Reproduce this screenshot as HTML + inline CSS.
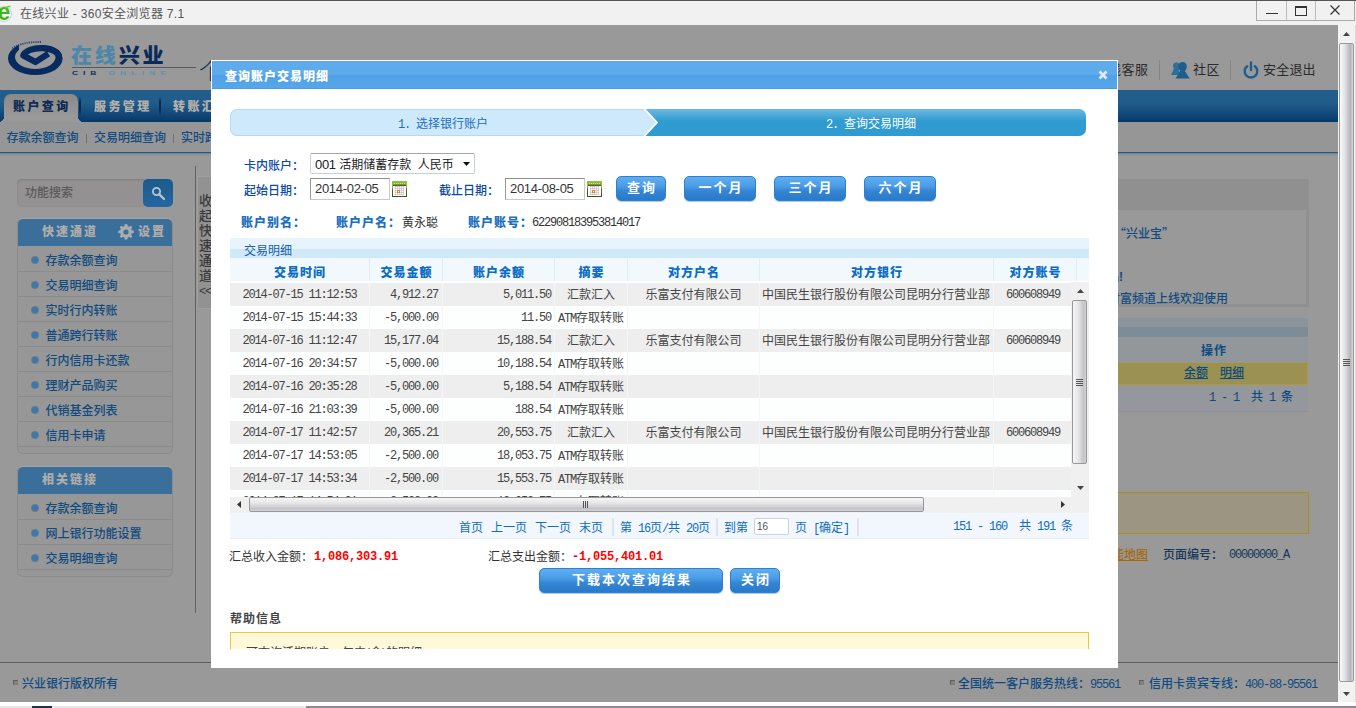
<!DOCTYPE html>
<html lang="zh-CN">
<head>
<meta charset="utf-8">
<title>在线兴业</title>
<style>
*{box-sizing:border-box;margin:0;padding:0}
html,body{width:1356px;height:708px;overflow:hidden;background:#999}
body{position:relative;font-family:"Liberation Sans","Noto Sans CJK SC",sans-serif;font-size:12px;color:#333}
.a{position:absolute;white-space:nowrap}
.t{position:absolute;white-space:nowrap;line-height:14px;height:14px;font-size:12px}
.b{font-weight:bold}
.m{font-family:"Liberation Mono","Noto Sans CJK SC",monospace;letter-spacing:-1.2px}
.mb{font-family:"Liberation Mono","Noto Sans CJK SC",monospace;font-weight:bold;letter-spacing:-0.2px}
/* ---------- browser chrome ---------- */
#tb{left:0;top:0;width:1356px;height:25px;background:#f1f1f1;border-top:1px solid #555}
#tb .ttl{left:20px;top:6px;color:#555;font-size:12px;line-height:14px;letter-spacing:.3px}
#wc{left:1256px;top:1px;width:99px;height:20px;border:1px solid #aaa;border-top:none;background:#f1f1f1}
#wc i{position:absolute;top:0;width:1px;height:19px;background:#bbb}
#vs{left:1338px;top:25px;width:18px;height:677px;background:#f2f2f2;border-right:1px solid #dcdcdc}
#vs .th{left:1px;top:18px;width:15px;height:639px;border:1px solid #999;border-radius:2px;background:linear-gradient(90deg,#fafafa 0,#e4e4e8 35%,#b4b4bc 80%,#d8d8dc 100%)}
#bot{left:0;top:702px;width:1356px;height:6px;background:#fff}
#bot i{position:absolute;left:306px;top:4px;width:1050px;height:2px;background:#908a90}
#bot b{position:absolute;left:32px;top:4px;width:20px;height:2px;background:#262c52}
#bot u{position:absolute;left:0;top:4px;width:306px;height:2px;background:#e6e6e6}
/* ---------- dimmed page ---------- */
#pg{left:0;top:25px;width:1338px;height:677px;background:#999;overflow:hidden;font-weight:500}
#nav{left:0;top:65px;width:1338px;height:32px;background:linear-gradient(#225e8c 0,#215d8b 40%,#164f80 65%,#053969 100%)}
#tab{left:4px;top:4px;width:74px;height:28px;background:linear-gradient(#898989,#999 80%);border-radius:7px 7px 0 0}
#tab:before,#tab:after{content:"";position:absolute;bottom:0;width:6px;height:6px}
#tab:before{left:-6px;background:radial-gradient(circle at 0 0,transparent 6px,#999 6.5px)}
#tab:after{right:-6px;background:radial-gradient(circle at 100% 0,transparent 6px,#999 6.5px)}
.nv{top:9px;font-size:12px;font-weight:900;letter-spacing:2.4px;line-height:16px;color:#b6b0aa}
.ns{top:6px;width:2px;height:20px;background:linear-gradient(rgba(10,40,80,0),#0b2b54 30%,#0b2b54 70%,rgba(10,40,80,0))}
#sub{left:0;top:97px;width:1338px;height:30px;background:#969696}
#sub .t{top:9px;color:#0f4a80}
#subl{left:0;top:127px;width:1338px;height:4px;background:linear-gradient(#1b5b91 0,#1b5b91 25%,#5f7990 25%,#8c8e90 50%,#949494 75%,#999 100%)}
.sb{color:#777;}
/* sidebar */
.pn{left:17px;width:156px;border:1px solid #8b8b8b;border-top-color:#a4a2a0;border-radius:6px;background:#979797}
.ph{left:0;top:0;width:154px;height:27px;background:#3b6f9b;border-radius:5px 5px 0 0}
.ph .t{top:5px;font-size:12px;font-weight:900;letter-spacing:2px;color:#b0aca8;line-height:16px;height:16px}
.it{left:0;width:154px;height:25px;border-bottom:1px solid #8b8b8b}
.it i{position:absolute;left:14px;top:10px;width:6px;height:6px;border-radius:50%;background:#3c78ae;box-shadow:0 0 0 1px #687c90}
.it span{position:absolute;left:27.500px;top:7px;line-height:14px;color:#0f4a80;white-space:nowrap}
/* ---------- dialog ---------- */
#dg{left:211px;top:60px;width:907px;height:608px;background:#fff;overflow:hidden}
#dt{left:1px;top:1px;width:905px;height:28px;background:linear-gradient(#5eaceb 0,#5daaea 48%,#4fa0e8 52%,#57a6e9 96%,#4392dc 100%)}
#dt .t{left:13px;top:9px;color:#fff;font-weight:900;letter-spacing:1px}
.lb{color:#0b4ba3;font-weight:500}
.inp{height:22px;width:80px;border:1px solid #c8c8c8;border-top-color:#8e8e8e;border-left-color:#9a9a9a;background:#fff;font-size:13px;letter-spacing:-0.3px;line-height:20px;padding-left:4px;color:#333}
.btn{top:116px;height:25px;border-radius:5px;border:1px solid #2d7fd0;background:linear-gradient(#5eaef1 0,#4b9ce6 40%,#3585d5 60%,#2b7aca 100%);color:#fff;font-weight:bold;font-size:13px;letter-spacing:2px;text-align:center;line-height:22px;text-indent:2px;box-shadow:0 1px 0 #a8cff0}
.ib{color:#1c6fc0;font-weight:900;letter-spacing:1px}
/* table */
#cap{left:19px;top:178px;width:859px;height:20px;background:linear-gradient(#e7f4fd 55%,#cfe9f8 55%)}
#hd{left:19px;top:198px;width:859px;height:23px;background:#f1f8fe}
#hd div{position:absolute;top:0;height:23px;border-right:1px solid #e1ecf5;text-align:center;color:#0a6cc4;font-weight:900;letter-spacing:1px;line-height:31px;text-indent:1px;overflow:hidden}
#bd{left:19px;top:221px;width:841px;height:216px;overflow:hidden;background:#fdfefe}
.r{position:absolute;left:0;width:841px;height:23px}
.r.g{background:#eee}
.r div{position:absolute;top:0;height:23px;line-height:25px;border-right:1px solid #f6f6f6;color:#444;white-space:nowrap;overflow:hidden}
.c1{left:0;width:140px;text-align:center}
.c2{left:140px;width:73px;text-align:right;padding-right:4px}
.c3{left:213px;width:112px;text-align:right;padding-right:3px}
.c4{left:325px;width:73px;text-align:center}
.c5{left:398px;width:132px;text-align:center}
.c6{left:530px;width:234px;text-align:left;padding-left:2px}
.c7{left:764px;width:83px;text-align:center;padding-right:4px}
#pgr{left:19px;top:453px;width:859px;height:26px;background:#f2f7fd;border-bottom:1px solid #e6edf5}
#pgr .t{top:8px;color:#0e6cc4;white-space:pre}
#pgr i{position:absolute;top:5px;width:2px;height:18px;background:#dfe3ea}
.sbtrk{background:#f0f0f0}
</style>
</head>
<body>
<!-- dimmed page behind the modal -->
<div id="pg" class="a">
  <!-- logo -->
  <svg class="a" style="left:0;top:11px" width="70" height="45" viewBox="0 36 70 45">
    <defs><clipPath id="lc"><path d="M0 36H70V81H0Z M19 36H70V57H62.100A21.100 12.100 0 0 0 19.900 57H19Z" clip-rule="evenodd"/></clipPath></defs>
    <path clip-path="url(#lc)" fill-rule="evenodd" fill="#072b5e" d="M8 58.300A27.300 16.800 0 1 0 62.600 58.300A27.300 16.800 0 1 0 8 58.300Z M15 57A20.300 12 0 1 0 55.600 57A20.300 12 0 1 0 15 57Z"/>
    <path d="M59 57A18 9 0 0 0 23.300 55.400L35.500 62L48.400 53.600" fill="none" stroke="#072b5e" stroke-width="6.200" stroke-linejoin="round"/>
    <path d="M12.500 48.500C18 44 28 41.800 41 42" fill="none" stroke="#072b5e" stroke-width="1.800" stroke-dasharray="1.200 1" opacity=".75"/>
  </svg>
  <div class="a" style="left:71px;top:18px;font-size:20px;font-weight:900;line-height:26px;letter-spacing:2.6px;color:#0a2a5c;transform:scaleX(1.055);transform-origin:0 0"><span style="color:#4b87a9">在线</span>兴业</div>
  <div class="a" style="left:72px;top:42px;width:124px;height:1px;background:#595959"></div>
  <div class="a b" style="left:72px;top:44px;font-size:6px;line-height:8px;letter-spacing:3.5px;color:#0a2a5c;transform:scaleX(1.4);transform-origin:0 0">CIB <span style="color:#5a93b3;letter-spacing:3.7px">ONLINE</span></div>
  <div class="a" style="left:199px;top:32px;font-size:23px;line-height:28px;color:#0a2a5c;font-weight:300">个</div>
  <!-- top right links -->
  <div class="a" style="left:1108px;top:37px;font-size:13px;line-height:16px;color:#2b2b2b;font-weight:400;letter-spacing:0.5px">线客服</div>
  <div class="a" style="left:1159px;top:35px;width:1px;height:20px;background:#858585"></div>
  <svg class="a" style="left:1170px;top:36px" width="21" height="19" viewBox="0 0 21 19"><path d="M6.5 1.5c2.2 0 3.6 1.8 3.6 4.2 0 1.6-.7 3-1.7 3.800l4 4.500H1l3-6.500C3.300 6.800 3 5.900 3 5c0-2 1.400-3.500 3.500-3.500z" fill="#2b6f9f"/><path d="M12.500 1c2.600 0 4.300 2 4.300 4.700 0 1.800-.8 3.300-2 4.300l5 7.500H5.500l4.700-7.700C9.100 8.800 8.400 7.300 8.400 5.700 8.400 3 10 1 12.500 1z" fill="#1d5e8f"/></svg>
  <div class="a" style="left:1193px;top:37px;font-size:13px;line-height:16px;color:#2b2b2b;font-weight:400;letter-spacing:0.5px">社区</div>
  <div class="a" style="left:1230px;top:35px;width:1px;height:20px;background:#858585"></div>
  <svg class="a" style="left:1242px;top:36px" width="18" height="19" viewBox="0 0 18 19"><path d="M5.200 5.200A6.300 6.300 0 1 0 12.800 5.200" fill="none" stroke="#1d5e8f" stroke-width="2.400" stroke-linecap="round"/><path d="M9 1.500V9" stroke="#1d5e8f" stroke-width="2.400" stroke-linecap="round"/></svg>
  <div class="a" style="left:1263px;top:37px;font-size:13px;line-height:16px;color:#2b2b2b;font-weight:400;letter-spacing:0.2px">安全退出</div>
  <!-- main nav -->
  <div id="nav" class="a">
    <div id="tab" class="a"></div>
    <div class="a nv" style="left:13px;color:#0d2a52">账户查询</div>
    <div class="a ns" style="left:79px"></div>
    <div class="a nv" style="left:94px">服务管理</div>
    <div class="a ns" style="left:159px"></div>
    <div class="a nv" style="left:173px">转账汇款</div>
  </div>
  <div id="sub" class="a">
    <div class="t" style="left:6.500px">存款余额查询</div><div class="a" style="left:86px;top:12px;width:1px;height:9px;background:#707070"></div>
    <div class="t" style="left:94px">交易明细查询</div><div class="a" style="left:173px;top:12px;width:1px;height:9px;background:#707070"></div>
    <div class="t" style="left:181px">实时跨行转账</div>
  </div>
  <div id="subl" class="a"></div>
  <!-- search -->
  <div class="a" style="left:17px;top:154px;width:130px;height:28px;border-radius:5px;background:#939191;box-shadow:inset 0 1px 2px #7d7d7d"></div>
  <div class="t" style="left:25px;top:161px;color:#5a5a5a;font-size:12px">功能搜索</div>
  <div class="a" style="left:143px;top:154px;width:30px;height:28px;border-radius:5px;background:linear-gradient(#1b5a8c,#2467a0)"></div>
  <svg class="a" style="left:151px;top:161px" width="15" height="15" viewBox="0 0 15 15"><circle cx="5.500" cy="5.500" r="3.600" fill="none" stroke="#b9c3cc" stroke-width="1.800"/><path d="M8.300 8.300L13 13" stroke="#b9c3cc" stroke-width="2.400" stroke-linecap="round"/></svg>
  <!-- quick panel -->
  <div class="a pn" style="top:193px;height:236px">
    <div class="a ph"><div class="t" style="left:24px">快速通道</div>
      <svg class="a" style="left:100px;top:5px" width="16" height="16" viewBox="0 0 16 16"><path d="M8 0l1.300.2.400 2 1.400.600 1.700-1.100 1.500 1.500-1.100 1.700.600 1.400 2 .400V8.900l-2 .400-.600 1.400 1.100 1.700-1.500 1.500-1.700-1.100-1.400.600-.400 2H6.700l-.400-2-1.400-.600-1.700 1.100-1.500-1.500 1.100-1.700-.600-1.400-2-.400V6.700l2-.400.600-1.400-1.100-1.700 1.500-1.500 1.700 1.100 1.400-.600.400-2z" fill="#aaacae"/><circle cx="8" cy="8" r="2.600" fill="#3b6f9b"/></svg>
      <div class="t" style="left:120px">设置</div></div>
    <div class="a it" style="top:28px"><i></i><span>存款余额查询</span></div>
    <div class="a it" style="top:53px"><i></i><span>交易明细查询</span></div>
    <div class="a it" style="top:78px"><i></i><span>实时行内转账</span></div>
    <div class="a it" style="top:103px"><i></i><span>普通跨行转账</span></div>
    <div class="a it" style="top:128px"><i></i><span>行内信用卡还款</span></div>
    <div class="a it" style="top:153px"><i></i><span>理财产品购买</span></div>
    <div class="a it" style="top:178px"><i></i><span>代销基金列表</span></div>
    <div class="a it" style="top:203px"><i></i><span>信用卡申请</span></div>
  </div>
  <div class="a pn" style="top:441px;height:111px">
    <div class="a ph"><div class="t" style="left:24px">相关链接</div></div>
    <div class="a it" style="top:28px"><i></i><span>存款余额查询</span></div>
    <div class="a it" style="top:53px"><i></i><span>网上银行功能设置</span></div>
    <div class="a it" style="top:78px"><i></i><span>交易明细查询</span></div>
  </div>
  <!-- collapse handle -->
  <div class="a" style="left:195px;top:141px;width:1px;height:447px;background:#616161"></div>
  <div class="a" style="left:197px;top:151px;width:20px;height:133px;background:#929292;border:1px solid #9f9f9f"></div>
  <div class="a" style="left:199px;top:168px;width:14px;font-size:13px;line-height:15px;color:#3a3a3a;white-space:normal;word-break:break-all">收起快速通道<span class="m" style="white-space:nowrap;font-size:12px">&lt;&lt;</span></div>
  <!-- right content (visible beside dialog) -->
  <div class="a" style="left:217px;top:154px;width:1092px;height:128px;background:#909090"></div>
  <div class="a" style="left:220px;top:185px;width:1086px;height:94px;background:#999"></div>
  <div class="t" style="left:1114px;top:201px;color:#0f4a80"><span style="font-family:'Noto Sans CJK SC',sans-serif">“</span>兴业宝<span style="font-family:'Noto Sans CJK SC',sans-serif">”</span></div>
  <div class="t b" style="left:1107px;top:245px;color:#0f4a80">品!</div>
  <div class="a" style="left:1108px;top:267px;height:12px;overflow:hidden"><div style="line-height:14px;color:#0f4a80;white-space:nowrap">财富频道上线欢迎使用</div></div>
  <div class="a" style="left:217px;top:293px;width:1091px;height:19px;background:linear-gradient(#8b949b 48%,#7d8c97 48%)"></div>
  <div class="a" style="left:217px;top:312px;width:1091px;height:25px;background:#92979b"></div>
  <div class="t b" style="left:1201px;top:319px;color:#0d4a80;letter-spacing:1px">操作</div>
  <div class="a" style="left:217px;top:337px;width:1091px;height:23px;background:#9a9152;border:1px solid #b39a2e;border-top-color:#9f9a66"></div>
  <div class="t" style="left:1184px;top:341px;color:#0d4a80;text-decoration:underline">余额</div>
  <div class="t" style="left:1220px;top:341px;color:#0d4a80;text-decoration:underline">明细</div>
  <div class="a" style="left:217px;top:360px;width:1091px;height:27px;background:#94979b;border-bottom:1px solid #8f9195"></div>
  <div class="t m" style="left:1209px;top:365px;color:#0d4a80;white-space:pre">1 - 1  <span style="letter-spacing:0;font-family:'Liberation Sans','Noto Sans CJK SC',sans-serif">共</span> 1 <span style="letter-spacing:0;font-family:'Liberation Sans','Noto Sans CJK SC',sans-serif">条</span></div>
  <div class="a" style="left:217px;top:467px;width:1092px;height:42px;background:#9b9581;border:1px solid #a88d1f"></div>
  <div class="t" style="left:1100px;top:523px;color:#a8680c;text-decoration:underline">功能地图</div>
  <div class="t" style="left:1163px;top:523px;color:#16365a">页面编号：</div>
  <div class="t m" style="left:1229px;top:523px;color:#16365a">00000000_A</div>
  <!-- footer -->
  <div class="a" style="left:0;top:637px;width:1338px;height:1px;background:#5e5e5e"></div>
  <div class="a" style="left:13px;top:655px;width:5px;height:5px;background:#82847c;border:1px solid #7e7e7e;border-left-color:#5e5e5e;border-top-color:#5e5e5e"></div>
  <div class="t" style="left:22px;top:652px;color:#0f4a80">兴业银行版权所有</div>
  <div class="a" style="left:950px;top:655px;width:5px;height:5px;background:#82847c;border:1px solid #7e7e7e;border-left-color:#5e5e5e;border-top-color:#5e5e5e"></div>
  <div class="t" style="left:958px;top:652px;color:#0f4a80">全国统一客户服务热线：<span class="m">95561</span></div>
  <div class="a" style="left:1139px;top:655px;width:5px;height:5px;background:#82847c;border:1px solid #7e7e7e;border-left-color:#5e5e5e;border-top-color:#5e5e5e"></div>
  <div class="t" style="left:1149px;top:652px;color:#0f4a80">信用卡贵宾专线：<span class="m">400-88-95561</span></div>
</div>

<!-- modal dialog -->
<div id="dg" class="a">
  <div id="dt" class="a"><div class="t">查询账户交易明细</div>
    <svg class="a" style="left:886px;top:9px" width="10" height="10" viewBox="0 0 10 10"><path d="M1.500 1.500L8.500 8.500M8.500 1.500L1.500 8.500" stroke="#e0e9f6" stroke-width="2.600"/></svg>
  </div>
  <!-- steps -->
  <svg class="a" style="left:19px;top:49px" width="857" height="27" viewBox="0 0 857 27">
    <defs><linearGradient id="g2" x1="0" y1="0" x2="0" y2="1"><stop offset="0" stop-color="#6cb9e1"/><stop offset=".45" stop-color="#2f9bd0"/><stop offset="1" stop-color="#2f9bd0"/></linearGradient>
    <clipPath id="cp"><rect x="0" y="0" width="856" height="27" rx="7"/></clipPath></defs>
    <g clip-path="url(#cp)"><rect x="0" y="0" width="856" height="27" fill="#cfe9fc"/>
    <path d="M414.500 0H856V27H414.500L428 13.500Z" fill="url(#g2)"/>
    <path d="M413.500 -1L427 13.500L413.500 28" fill="none" stroke="#fff" stroke-width="1.700"/></g>
    <path d="M414 .5H7A6.500 6.500 0 0 0 .5 7V20A6.500 6.500 0 0 0 7 26.500H414" fill="none" stroke="#b4daf8" stroke-width="1"/>
  </svg>
  <div class="t" style="left:187px;top:57px;color:#1a6fc4"><span class="m">1. </span>选择银行账户</div>
  <div class="t" style="left:615px;top:57px;color:#fff"><span class="m">2. </span>查询交易明细</div>
  <!-- form -->
  <div class="t lb" style="left:33px;top:99px">卡内账户：</div>
  <div class="a" style="left:99px;top:93px;width:165px;height:21px;border:1px solid #c6cde4;border-top-color:#a4a6ae;border-radius:2px;background:#fff;font-size:12px;line-height:21px;padding-left:4px;color:#222"><span style="font-size:13px;letter-spacing:-0.3px">001</span> 活期储蓄存款&nbsp; 人民币</div>
  <svg class="a" style="left:252px;top:102px" width="7" height="4" viewBox="0 0 7 4"><path d="M0 0H7L3.500 4Z" fill="#111"/></svg>
  <div class="t lb" style="left:33px;top:124px">起始日期：</div>
  <div class="a inp" style="left:99px;top:118px">2014-02-05</div>
  <div class="t lb" style="left:228px;top:124px">截止日期：</div>
  <div class="a inp" style="left:294px;top:118px">2014-08-05</div>
  <svg class="a cal" style="left:181px;top:121px" width="15" height="16" viewBox="0 0 15 16"><defs><linearGradient id="cg1" x1="0" y1="0" x2="0" y2="1"><stop offset="0" stop-color="#8bc53b"/><stop offset=".42" stop-color="#86b838"/><stop offset=".5" stop-color="#6b5a22"/><stop offset=".68" stop-color="#6b5a22"/><stop offset=".75" stop-color="#3d6a10"/><stop offset="1" stop-color="#33590c"/></linearGradient><pattern id="cp1" width="2" height="2" patternUnits="userSpaceOnUse" x="3" y="5"><rect width="2" height="2" fill="#c9e1f5"/><rect width="1" height="1" fill="#f0aea2"/><rect x="1" y="1" width="1" height="1" fill="#fff"/></pattern></defs><rect x=".5" y=".5" width="14" height="15" fill="#fff" stroke="url(#cg1)"/><rect x="1" y="1" width="13" height="1" fill="#86c038"/><rect x="1" y="2" width="13" height="1" fill="#cfe7a4"/><path d="M1 2.500H14" stroke="#7db535" stroke-dasharray="1 1"/><rect x="1" y="3" width="13" height="1" fill="#7a6a2a"/><path d="M1.500 3.500H14" stroke="#86c038" stroke-dasharray="1 1"/><rect x="1" y="4" width="13" height="1" fill="#6b5a22"/><rect x="3" y="5" width="9" height="9" fill="url(#cp1)"/><rect x="5" y="9" width="3" height="3" fill="#f08323"/><rect x="6" y="10" width="1" height="1" fill="#fff"/></svg>
  <svg class="a cal" style="left:376px;top:121px" width="15" height="16" viewBox="0 0 15 16"><defs><linearGradient id="cg2" x1="0" y1="0" x2="0" y2="1"><stop offset="0" stop-color="#8bc53b"/><stop offset=".42" stop-color="#86b838"/><stop offset=".5" stop-color="#6b5a22"/><stop offset=".68" stop-color="#6b5a22"/><stop offset=".75" stop-color="#3d6a10"/><stop offset="1" stop-color="#33590c"/></linearGradient><pattern id="cp2" width="2" height="2" patternUnits="userSpaceOnUse" x="3" y="5"><rect width="2" height="2" fill="#c9e1f5"/><rect width="1" height="1" fill="#f0aea2"/><rect x="1" y="1" width="1" height="1" fill="#fff"/></pattern></defs><rect x=".5" y=".5" width="14" height="15" fill="#fff" stroke="url(#cg2)"/><rect x="1" y="1" width="13" height="1" fill="#86c038"/><rect x="1" y="2" width="13" height="1" fill="#cfe7a4"/><path d="M1 2.500H14" stroke="#7db535" stroke-dasharray="1 1"/><rect x="1" y="3" width="13" height="1" fill="#7a6a2a"/><path d="M1.500 3.500H14" stroke="#86c038" stroke-dasharray="1 1"/><rect x="1" y="4" width="13" height="1" fill="#6b5a22"/><rect x="3" y="5" width="9" height="9" fill="url(#cp2)"/><rect x="5" y="9" width="3" height="3" fill="#f08323"/><rect x="6" y="10" width="1" height="1" fill="#fff"/></svg>
  <div class="a btn" style="left:405px;width:50px">查询</div>
  <div class="a btn" style="left:473px;width:72px">一个月</div>
  <div class="a btn" style="left:563px;width:72px">三个月</div>
  <div class="a btn" style="left:653px;width:72px">六个月</div>
  <!-- account info -->
  <div class="t ib" style="left:30px;top:156px">账户别名：</div>
  <div class="t ib" style="left:125px;top:156px">账户户名：</div>
  <div class="t" style="left:191px;top:156px;color:#333">黄永聪</div>
  <div class="t ib" style="left:257px;top:156px">账户账号：</div>
  <div class="t m" style="left:321px;top:156px;color:#333">622908183953814017</div>
  <!-- grid -->
  <div id="cap" class="a"><div class="t" style="left:14px;top:6px;color:#1a5fa8">交易明细</div></div>
  <div id="hd" class="a">
    <div style="left:0;width:140px">交易时间</div><div style="left:140px;width:73px">交易金额</div><div style="left:213px;width:112px">账户余额</div><div style="left:325px;width:73px">摘要</div><div style="left:398px;width:132px">对方户名</div><div style="left:530px;width:234px">对方银行</div><div style="left:764px;width:83px">对方账号</div>
  </div>
  <div id="bd" class="a">
    <div class="r g" style="top:2px"><div class="c1 m">2014-07-15 11:12:53</div><div class="c2 m">4,912.27</div><div class="c3 m">5,011.50</div><div class="c4">汇款汇入</div><div class="c5">乐富支付有限公司</div><div class="c6">中国民生银行股份有限公司昆明分行营业部</div><div class="c7 m">600608949</div></div>
    <div class="r" style="top:25px"><div class="c1 m">2014-07-15 15:44:33</div><div class="c2 m">-5,000.00</div><div class="c3 m">11.50</div><div class="c4"><span class="m">ATM</span>存取转账</div><div class="c5"></div><div class="c6"></div><div class="c7"></div></div>
    <div class="r g" style="top:48px"><div class="c1 m">2014-07-16 11:12:47</div><div class="c2 m">15,177.04</div><div class="c3 m">15,188.54</div><div class="c4">汇款汇入</div><div class="c5">乐富支付有限公司</div><div class="c6">中国民生银行股份有限公司昆明分行营业部</div><div class="c7 m">600608949</div></div>
    <div class="r" style="top:71px"><div class="c1 m">2014-07-16 20:34:57</div><div class="c2 m">-5,000.00</div><div class="c3 m">10,188.54</div><div class="c4"><span class="m">ATM</span>存取转账</div><div class="c5"></div><div class="c6"></div><div class="c7"></div></div>
    <div class="r g" style="top:94px"><div class="c1 m">2014-07-16 20:35:28</div><div class="c2 m">-5,000.00</div><div class="c3 m">5,188.54</div><div class="c4"><span class="m">ATM</span>存取转账</div><div class="c5"></div><div class="c6"></div><div class="c7"></div></div>
    <div class="r" style="top:117px"><div class="c1 m">2014-07-16 21:03:39</div><div class="c2 m">-5,000.00</div><div class="c3 m">188.54</div><div class="c4"><span class="m">ATM</span>存取转账</div><div class="c5"></div><div class="c6"></div><div class="c7"></div></div>
    <div class="r g" style="top:140px"><div class="c1 m">2014-07-17 11:42:57</div><div class="c2 m">20,365.21</div><div class="c3 m">20,553.75</div><div class="c4">汇款汇入</div><div class="c5">乐富支付有限公司</div><div class="c6">中国民生银行股份有限公司昆明分行营业部</div><div class="c7 m">600608949</div></div>
    <div class="r" style="top:163px"><div class="c1 m">2014-07-17 14:53:05</div><div class="c2 m">-2,500.00</div><div class="c3 m">18,053.75</div><div class="c4"><span class="m">ATM</span>存取转账</div><div class="c5"></div><div class="c6"></div><div class="c7"></div></div>
    <div class="r g" style="top:186px"><div class="c1 m">2014-07-17 14:53:34</div><div class="c2 m">-2,500.00</div><div class="c3 m">15,553.75</div><div class="c4"><span class="m">ATM</span>存取转账</div><div class="c5"></div><div class="c6"></div><div class="c7"></div></div>
    <div class="r" style="top:209px"><div class="c1 m">2014-07-17 14:54:01</div><div class="c2 m">-2,500.00</div><div class="c3 m">13,053.75</div><div class="c4"><span class="m">ATM</span>存取转账</div><div class="c5"></div><div class="c6"></div><div class="c7"></div></div>
  </div>
  <!-- grid vertical scrollbar -->
  <div class="a sbtrk" style="left:860px;top:222px;width:18px;height:231px"></div>
  <svg class="a" style="left:866px;top:229px" width="7" height="4" viewBox="0 0 7 4"><path d="M0 4L3.500 0L7 4Z" fill="#444"/></svg>
  <div class="a" style="left:861px;top:240px;width:15px;height:164px;border:1px solid #979797;border-radius:2px;background:linear-gradient(90deg,#f6f6f6 0,#e6e6e8 40%,#c2c2c6 85%,#d6d6d8 100%)"></div>
  <div class="a" style="left:865px;top:319px;width:7px;height:7px;background:repeating-linear-gradient(#555 0 1px,transparent 1px 2px)"></div>
  <svg class="a" style="left:866px;top:426px" width="7" height="4" viewBox="0 0 7 4"><path d="M0 0L3.500 4L7 0Z" fill="#444"/></svg>
  <!-- grid horizontal scrollbar -->
  <div class="a sbtrk" style="left:19px;top:437px;width:841px;height:16px"></div>
  <svg class="a" style="left:26px;top:441px" width="4" height="7" viewBox="0 0 4 7"><path d="M4 0L0 3.500L4 7Z" fill="#333"/></svg>
  <div class="a" style="left:38px;top:437px;width:675px;height:15px;border:1px solid #979797;border-radius:2px;background:linear-gradient(#f6f6f6 0,#e6e6e8 40%,#c2c2c6 85%,#d6d6d8 100%)"></div>
  <div class="a" style="left:372px;top:441px;width:5px;height:7px;background:repeating-linear-gradient(90deg,#555 0 1px,transparent 1px 2px)"></div>
  <svg class="a" style="left:850px;top:441px" width="4" height="7" viewBox="0 0 4 7"><path d="M0 0L4 3.500L0 7Z" fill="#333"/></svg>
  <!-- pager -->
  <div id="pgr" class="a">
    <div class="t" style="left:229px">首页</div><div class="t" style="left:261px">上一页</div><div class="t" style="left:305px">下一页</div><div class="t" style="left:349px">末页</div>
    <i style="left:382px"></i>
    <div class="t" style="left:390px">第<span class="m"> 16</span>页<span class="m">/</span>共<span class="m"> 20</span>页</div>
    <i style="left:486px"></i>
    <div class="t" style="left:494px">到第</div>
    <div class="a" style="left:524px;top:5px;width:35px;height:17px;border:1px solid #c9d3df;border-radius:2px;background:#fff;font-size:10px;line-height:15px;padding-left:2px;color:#555">16</div>
    <div class="t" style="left:565px">页<span class="m"> [</span>确定<span class="m">]</span></div>
    <i style="left:627px"></i>
    <div class="t m" style="left:723px;top:7px;white-space:pre">151 - 160  <span style="letter-spacing:0">共</span> 191 <span style="letter-spacing:0">条</span></div>
  </div>
  <!-- totals -->
  <div class="t" style="left:18px;top:490px;color:#333">汇总收入金额：</div>
  <div class="t mb" style="left:103px;top:490px;color:#f00">1,086,303.91</div>
  <div class="t" style="left:277px;top:490px;color:#333">汇总支出金额：</div>
  <div class="t mb" style="left:361px;top:490px;color:#f00">-1,055,401.01</div>
  <div class="a btn" style="left:328px;top:508px;width:184px">下载本次查询结果</div>
  <div class="a btn" style="left:519px;top:508px;width:50px">关闭</div>
  <!-- help -->
  <div class="t b" style="left:19px;top:552px;color:#444;letter-spacing:1px">帮助信息</div>
  <div class="a" style="left:19px;top:572px;width:859px;height:17px;overflow:hidden"><div style="height:60px;border:1px solid #e9c83c;background:#fff9d9;padding:13px 0 0 15px;line-height:14px;color:#444">可查询活期账户一年内(含)的明细。</div></div>
</div>

<!-- browser title bar / scrollbar -->
<div id="tb" class="a">
  <svg class="a" style="left:0;top:0" width="14" height="25" viewBox="0 0 14 25"><circle cx="3.900" cy="13" r="7.500" fill="#fff" stroke="#c6cbe0" stroke-width="1"/><text x="-2.400" y="19.400" font-family="Liberation Sans, sans-serif" font-weight="bold" font-size="23" fill="#3db80d">e</text><path d="M5 7.200C6.500 5.800 8.500 5.200 10.600 5.700" fill="none" stroke="#6ccf2c" stroke-width="1.300"/></svg>
  <div class="a ttl">在线兴业 - 360安全浏览器 7.1</div>
</div>
<div id="wc" class="a"><i style="left:29px"></i><i style="left:58px"></i>
  <svg class="a" style="left:0;top:0" width="98" height="20" viewBox="0 0 98 20"><path d="M9 12.500H21" stroke="#333" stroke-width="1"/><rect x="38.500" y="5.500" width="11" height="9" fill="none" stroke="#333"/><path d="M38 6.500H50" stroke="#333" stroke-width="1"/><path d="M73.500 4.500L82.500 13.500M82.500 4.500L73.500 13.500" stroke="#333" stroke-width="1.200"/></svg>
</div>
<div id="vs" class="a">
  <svg class="a" style="left:5px;top:7px" width="7" height="4" viewBox="0 0 7 4"><path d="M0 4L3.500 0L7 4Z" fill="#444"/></svg>
  <div class="a th"></div>
  <div class="a" style="left:5px;top:334px;width:7px;height:7px;background:repeating-linear-gradient(#555 0 1px,transparent 1px 2px)"></div>
  <svg class="a" style="left:5px;top:667px" width="7" height="4" viewBox="0 0 7 4"><path d="M0 0L3.500 4L7 0Z" fill="#444"/></svg>
</div>
<div id="bot" class="a"><u></u><i></i><b></b></div>
</body>
</html>
